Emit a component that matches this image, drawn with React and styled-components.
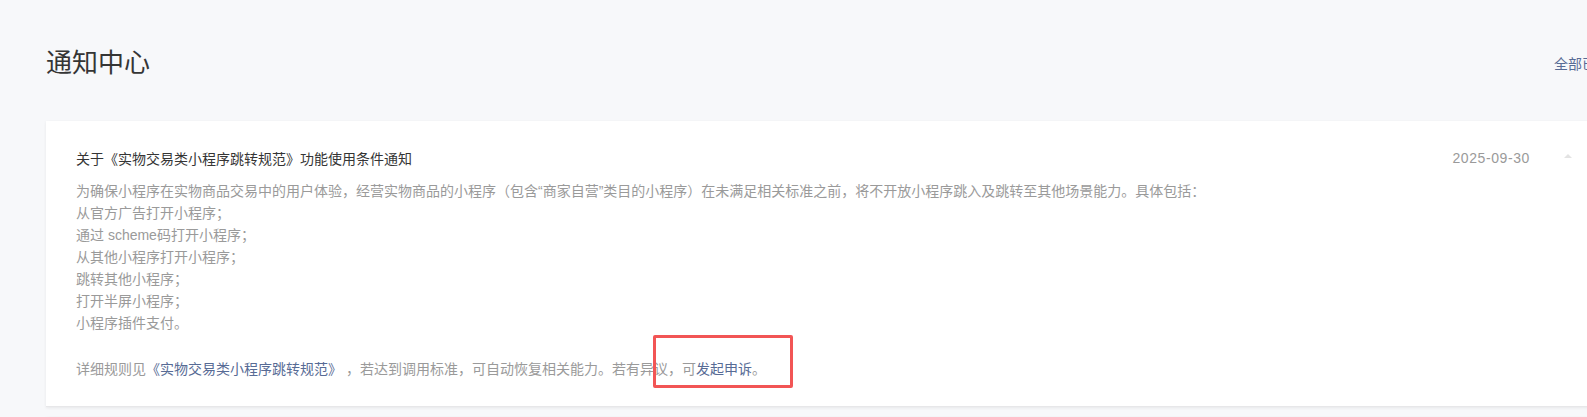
import React from 'react';
import styled, { createGlobalStyle } from 'styled-components';

const GlobalStyle = createGlobalStyle`
  html, body {
    margin: 0;
    padding: 0;
    background: #f7f8fa;
    overflow: hidden;
  }
  body {
    font-family: "Helvetica Neue", "Liberation Sans", "Noto Sans CJK SC", sans-serif;
  }
`;

const Page = styled.div`
  width: 1564px;
  padding: 48px 0 0 46px;
`;

const Header = styled.div`
  display: flex;
  justify-content: space-between;
  align-items: center;
  height: 30px;
  margin-bottom: 43px;
`;

const PageTitle = styled.h2`
  margin: 0;
  font-size: 26px;
  font-weight: 400;
  line-height: 30px;
  color: #353535;
`;

const HeadLink = styled.a`
  font-size: 14px;
  color: #576b95;
  text-decoration: none;
  white-space: nowrap;
`;

const Card = styled.div`
  position: relative;
  background: #fff;
  padding: 26px 30px 26px;
  box-shadow: 0 1px 3px rgba(0, 0, 0, 0.07);
  border-bottom: 1px solid #e7e7e9;
  margin-bottom: 10px;
`;

const CardHead = styled.div`
  display: flex;
  align-items: center;
  height: 22px;
  margin-bottom: 11px;
`;

const CardTitle = styled.div`
  flex: 1;
  font-size: 14px;
  color: #353535;
`;

const Date = styled.span`
  font-size: 14px;
  letter-spacing: 0.6px;
  color: #9a9a9a;
  margin-right: 34px;
`;

// little "collapse" arrow
const Arrow = styled.span`
  width: 0;
  height: 0;
  border-left: 4px solid transparent;
  border-right: 4px solid transparent;
  border-bottom: 4px solid #e3e3e3;
  margin-right: 8px;
  margin-top: -4px;
`;

const Body = styled.div`
  font-size: 14px;
  line-height: 22px;
  color: #9a9a9a;
`;

const Line = styled.div`
  min-height: ${p => (p.$gap ? 24 : 22)}px;
`;

const Link = styled.a`
  color: #576b95;
  text-decoration: none;
`;

// red annotation frame drawn over the text
const Mark = styled.div`
  position: absolute;
  left: 607px;
  top: 214px;
  width: 134px;
  height: 47px;
  border: 3px solid #f25555;
  border-radius: 2px;
  pointer-events: none;
`;

const lines = [
  '为确保小程序在实物商品交易中的用户体验，经营实物商品的小程序（包含“商家自营”类目的小程序）在未满足相关标准之前，将不开放小程序跳入及跳转至其他场景能力。具体包括：',
  '从官方广告打开小程序；',
  '通过 scheme码打开小程序；',
  '从其他小程序打开小程序；',
  '跳转其他小程序；',
  '打开半屏小程序；',
  '小程序插件支付。',
];

const App = () => (
  <>
    <GlobalStyle />
    <Page>
      <Header>
        <PageTitle>通知中心</PageTitle>
        <HeadLink href="#">全部已读</HeadLink>
      </Header>
      <Card>
        <CardHead>
          <CardTitle>关于《实物交易类小程序跳转规范》功能使用条件通知</CardTitle>
          <Date>2025-09-30</Date>
          <Arrow />
        </CardHead>
        <Body>
          {lines.map((l, i) => <Line key={i}>{l}</Line>)}
          <Line $gap />
          <Line>
            详细规则见<Link href="#">《实物交易类小程序跳转规范》</Link>&nbsp;，若达到调用标准，可自动恢复相关能力。若有异议，可<Link href="#">发起申诉</Link>。
          </Line>
        </Body>
        <Mark />
      </Card>
      <Card style={{ height: 60 }} />
    </Page>
  </>
);

export default App;
